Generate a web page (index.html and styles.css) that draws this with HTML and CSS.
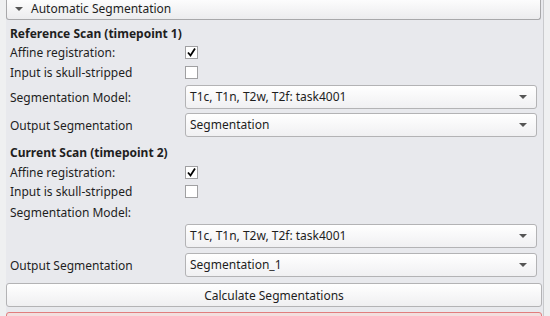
FILE: index.html
```html
<!DOCTYPE html>
<html lang="en">
<head>
    <meta charset="UTF-8">
    <title>Automatic Segmentation</title>
    <link rel="stylesheet" href="styles.css">
</head>
<body>
    <div class="panel">
        <div class="collapsible-header">
            <span class="arrow"></span>
            <span>Automatic Segmentation</span>
        </div>

        <div class="form">
            <div class="row title first">Reference Scan (timepoint 1)</div>
            <div class="row r-affine1">
                <span class="label">Affine registration:</span>
                <span class="checkbox"><svg width="11" height="11" viewBox="0 0 11 11"><path d="M2 5.5 L4.5 8.5 L9 1.5" fill="none" stroke="#000" stroke-width="1.8"/></svg></span>
            </div>
            <div class="row r-skull1">
                <span class="label">Input is skull-stripped</span>
                <span class="checkbox"></span>
            </div>
            <div class="row combo-row r-model1">
                <span class="label">Segmentation Model:</span>
                <div class="combo">T1c, T1n, T2w, T2f: task4001<span class="combo-arrow"></span></div>
            </div>
            <div class="row combo-row r-out1">
                <span class="label">Output Segmentation</span>
                <div class="combo">Segmentation<span class="combo-arrow"></span></div>
            </div>

            <div class="row title r-title2">Current Scan (timepoint 2)</div>
            <div class="row r-affine2">
                <span class="label">Affine registration:</span>
                <span class="checkbox"><svg width="11" height="11" viewBox="0 0 11 11"><path d="M2 5.5 L4.5 8.5 L9 1.5" fill="none" stroke="#000" stroke-width="1.8"/></svg></span>
            </div>
            <div class="row r-skull2">
                <span class="label">Input is skull-stripped</span>
                <span class="checkbox"></span>
            </div>
            <div class="row r-model2">
                <span class="label">Segmentation Model:</span>
            </div>
            <div class="row combo-row r-combo3">
                <span class="label"></span>
                <div class="combo">T1c, T1n, T2w, T2f: task4001<span class="combo-arrow"></span></div>
            </div>
            <div class="row combo-row r-out2">
                <span class="label">Output Segmentation</span>
                <div class="combo">Segmentation_1<span class="combo-arrow"></span></div>
            </div>
        </div>

        <button class="calc-button">Calculate Segmentations</button>
        <div class="status-box"></div>
    </div>
</body>
</html>
```

FILE: styles.css
```css
/* panel in the side bar */
body {
    margin: 0;
    background: #eff0f1;
    font-family: "Noto Sans", "DejaVu Sans", sans-serif;
    font-size: 12px;
    color: #1e1e1e;
    height: 316px;
    overflow: hidden;
}

.panel {
    margin-left: 6px;
    width: 537px;
    height: 316px;
    overflow: hidden;
    background: #e8e9ed;
    border-right: 1px solid #c9cacd;
}

.collapsible-header {
    display: flex;
    align-items: center;
    gap: 8px;
    margin-top: -3px;
    height: 23px;
    width: 535px;
    padding-left: 8px;
    box-sizing: border-box;
    background: linear-gradient(#ffffff, #ececee);
    border: 1px solid #a8a8aa;
    border-top: none;
    border-radius: 0 0 3px 3px;
}

.arrow {
    width: 0;
    height: 0;
    margin-top: 2px;
    border-left: 4px solid transparent;
    border-right: 4px solid transparent;
    border-top: 4px solid #555;
}

.form {
    padding-left: 4px;
}

.row {
    display: flex;
    align-items: center;
    height: 18px;
}

.title {
    font-weight: bold;
}

.label {
    width: 175px;
    flex: none;
}

.first { margin-top: 4px; height: 18px; }
.r-affine1 { margin-top: 1px; }
.r-skull1 { margin-top: 1px; height: 20px; }
.r-model1 { margin-top: 3px; }
.r-out1 { margin-top: 4px; }
.r-title2 { margin-top: 6px; }
.r-affine2 { margin-top: 2px; }
.r-skull2 { margin-top: 1px; }
.r-model2 { margin-top: 3px; }
.r-combo3 { margin-top: 3px; }
.r-out2 { margin-top: 5px; }

.combo-row {
    height: 24px;
}

.checkbox {
    width: 11px;
    height: 11px;
    background: #fff;
    border: 1px solid #a0a0a2;
}

.checkbox svg {
    display: block;
}

.combo {
    position: relative;
    width: 352px;
    height: 24px;
    box-sizing: border-box;
    padding-left: 4px;
    line-height: 22px;
    background: linear-gradient(#ffffff, #f0f0f2);
    border: 1px solid #b3b3b5;
    border-radius: 3px;
}

.combo-arrow {
    position: absolute;
    right: 9px;
    top: 9px;
    width: 0;
    height: 0;
    border-left: 4px solid transparent;
    border-right: 4px solid transparent;
    border-top: 4px solid #555;
}

.calc-button {
    display: block;
    margin-top: 6px;
    width: 536px;
    height: 24px;
    font-family: inherit;
    font-size: 12px;
    color: #1e1e1e;
    background: linear-gradient(#ffffff, #efeff1);
    border: 1px solid #b3b3b5;
    border-radius: 3px;
}

.status-box {
    margin-top: 5px;
    width: 536px;
    height: 20px;
    box-sizing: border-box;
    background: #f3dede;
    border: 1px solid #e27d7d;
    border-radius: 3px;
}
```
